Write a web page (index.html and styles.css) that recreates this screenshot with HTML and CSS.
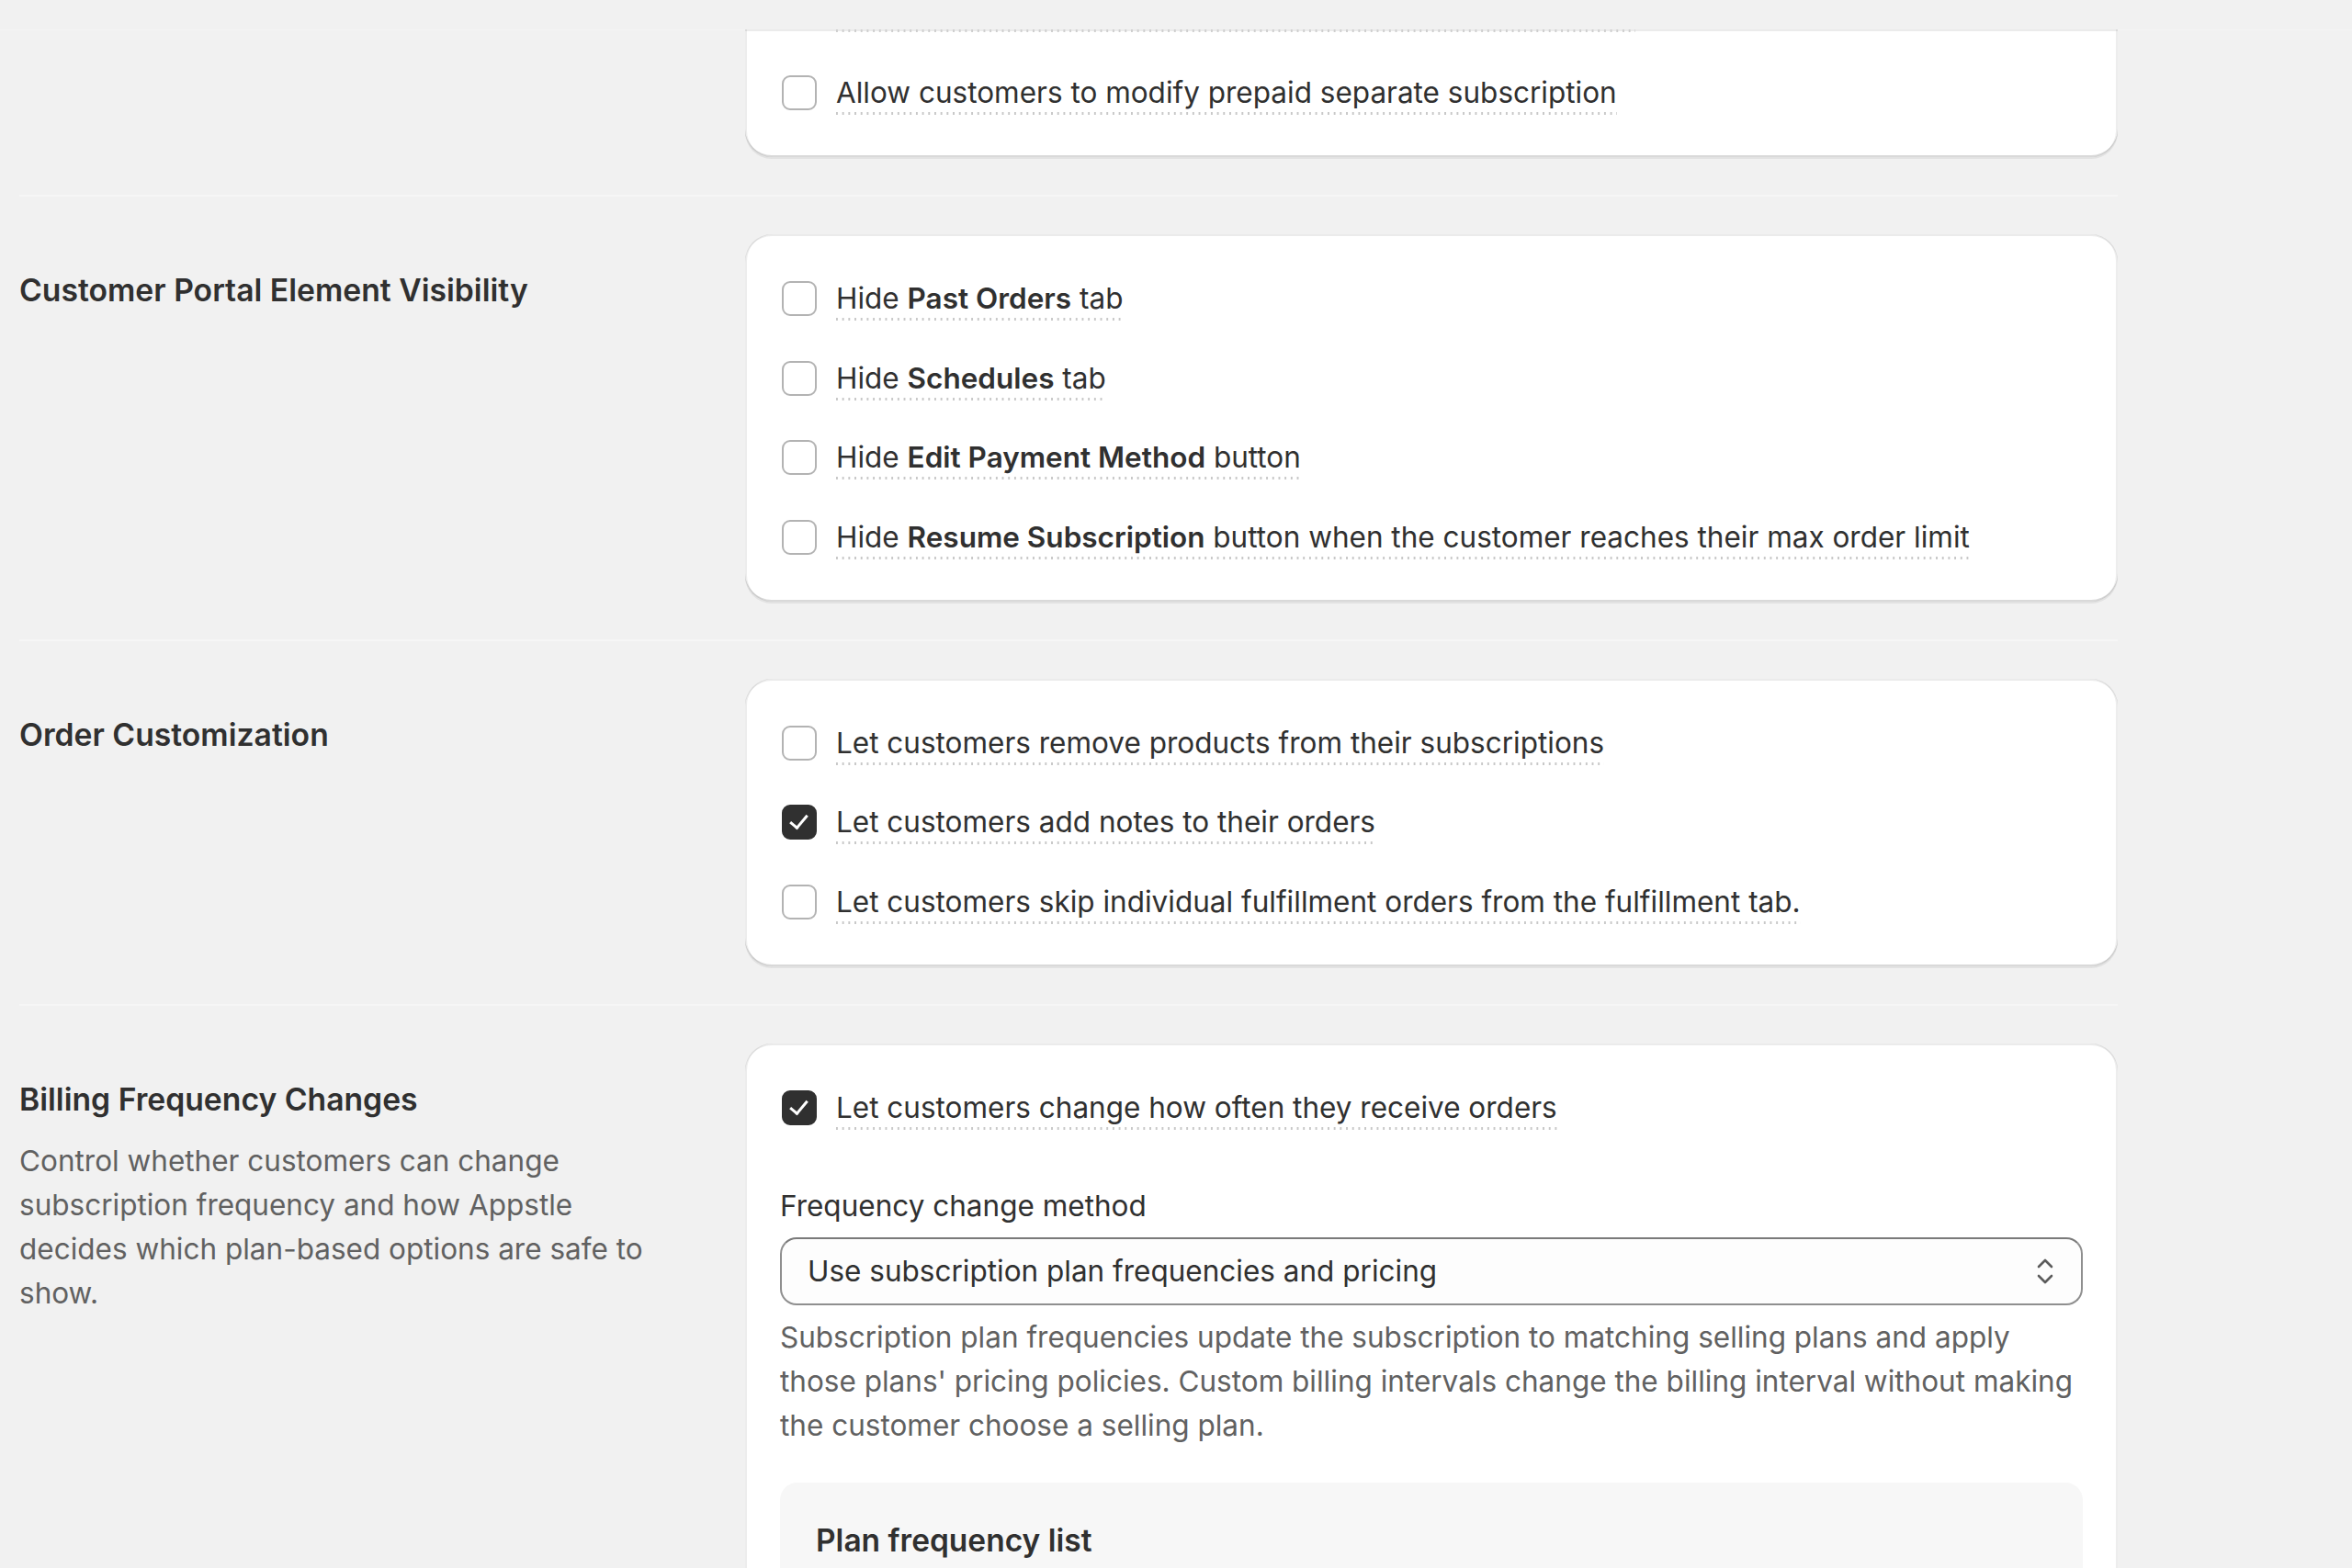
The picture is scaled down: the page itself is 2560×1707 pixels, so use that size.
FILE: index.html
```html
<!DOCTYPE html>
<html>
<head>
  <title>Customer Portal Settings</title>
  <link rel="stylesheet" href="styles.css">
</head>
<body>
  <div class="top-edge"></div>

  <div class="page">
    <section class="section first">
      <div class="annotation"></div>
      <div class="card cut-card">
        <div class="cut-line"></div>
        <div class="options">
          <label class="option">
            <span class="box"></span>
            <span class="text">Allow customers to modify prepaid separate subscription</span>
          </label>
        </div>
      </div>
    </section>

    <hr class="divider">

    <section class="section">
      <div class="annotation">
        <h2>Customer Portal Element Visibility</h2>
      </div>
      <div class="card">
        <div class="options">
          <label class="option">
            <span class="box"></span>
            <span class="text">Hide <b>Past Orders</b> tab</span>
          </label>
          <label class="option">
            <span class="box"></span>
            <span class="text">Hide <b>Schedules</b> tab</span>
          </label>
          <label class="option">
            <span class="box"></span>
            <span class="text">Hide <b>Edit Payment Method</b> button</span>
          </label>
          <label class="option">
            <span class="box"></span>
            <span class="text">Hide <b>Resume Subscription</b> button when the customer reaches their max order limit</span>
          </label>
        </div>
      </div>
    </section>

    <hr class="divider">

    <section class="section">
      <div class="annotation">
        <h2>Order Customization</h2>
      </div>
      <div class="card">
        <div class="options">
          <label class="option">
            <span class="box"></span>
            <span class="text">Let customers remove products from their subscriptions</span>
          </label>
          <label class="option">
            <span class="box checked"></span>
            <span class="text">Let customers add notes to their orders</span>
          </label>
          <label class="option">
            <span class="box"></span>
            <span class="text">Let customers skip individual fulfillment orders from the fulfillment tab.</span>
          </label>
        </div>
      </div>
    </section>

    <hr class="divider">

    <section class="section">
      <div class="annotation">
        <h2>Billing Frequency Changes</h2>
        <p>Control whether customers can change subscription frequency and how Appstle decides which plan-based options are safe to show.</p>
      </div>
      <div class="card">
        <div class="options">
          <label class="option">
            <span class="box checked"></span>
            <span class="text">Let customers change how often they receive orders</span>
          </label>
        </div>

        <div class="field">
          <div class="field-label">Frequency change method</div>
          <div class="select">
            <span>Use subscription plan frequencies and pricing</span>
            <svg width="22" height="34" viewBox="0 0 22 34">
              <polyline points="4,12 11,5 18,12" fill="none" stroke="#5c5c5c" stroke-width="2.6" stroke-linecap="round" stroke-linejoin="round"/>
              <polyline points="4,22 11,29 18,22" fill="none" stroke="#5c5c5c" stroke-width="2.6" stroke-linecap="round" stroke-linejoin="round"/>
            </svg>
          </div>
          <div class="help">Subscription plan frequencies update the subscription to matching selling plans and apply those plans' pricing policies. Custom billing intervals change the billing interval without making the customer choose a selling plan.</div>
        </div>

        <div class="inner-box">
          <h3>Plan frequency list</h3>
        </div>
      </div>
    </section>
  </div>
</body>
</html>
```

FILE: styles.css
```css
body {
  margin: 0;
  background-color: #f1f1f1;
  font-family: Inter, "Noto Sans", sans-serif;
  color: #303030;
  font-size: 31.5px;
  line-height: 48px;
  overflow: hidden;
}

.top-edge {
  height: 32px;
  border-bottom: 1px solid #f4f4f4;
  margin-bottom: -1px;
}

.page {
  width: 2284px;
  padding-left: 21px;
}

.section {
  display: grid;
  grid-template-columns: 742px 1494px;
  column-gap: 48px;
  padding: 41px 0 41px;
}

.section.first {
  padding-top: 0;
}

.divider {
  margin: 0;
  border: none;
  height: 2px;
  background-color: #f6f6f6;
}

.annotation {
  padding-top: 37px;
}

.annotation h2 {
  margin: 0;
  font-size: 33.7px;
  font-weight: 600;
  line-height: 48px;
}

.annotation p {
  margin: 19px 0 0;
  color: #616161;
  width: 700px;
}

.card {
  background-color: #fff;
  border-radius: 29px;
  padding: 38px;
  box-shadow: 0 2px 0 0 rgba(26, 26, 26, 0.07),
    inset 0 -2px 0 0 rgba(0, 0, 0, 0.15),
    inset 2px 0 0 0 rgba(0, 0, 0, 0.07),
    inset -2px 0 0 0 rgba(0, 0, 0, 0.07),
    inset 0 2px 0 0 rgba(204, 204, 204, 0.4);
}

.cut-card {
  border-top-left-radius: 0;
  border-top-right-radius: 0;
  padding-top: 0;
}

.cut-line {
  height: 4px;
  width: 870px;
  margin: 0 0 33px 61px;
  background-image: linear-gradient(to right, #cfcfcf 2px, transparent 2px);
  background-size: 6.7px 3px;
  background-repeat: repeat-x;
}

.options {
  display: flex;
  flex-direction: column;
  gap: 22.5px;
}

.option {
  display: flex;
  align-items: center;
  gap: 21px;
  min-height: 64px;
}

.box {
  flex: none;
  box-sizing: border-box;
  width: 38px;
  height: 38px;
  margin-left: 2px;
  border: 2.4px solid #b3b3b3;
  border-radius: 9px;
  background-color: #fff;
}

.box.checked {
  border-color: #303030;
  background-color: #303030;
  position: relative;
}

.box.checked::after {
  content: "";
  position: absolute;
  left: 11px;
  top: 5px;
  width: 8px;
  height: 16px;
  border: solid #fff;
  border-width: 0 3.5px 3.5px 0;
  transform: rotate(40deg);
}

.text {
  display: inline-block;
  background-image: linear-gradient(to right, #c8c8c8 2px, transparent 2px);
  background-size: 6.7px 3px;
  background-repeat: repeat-x;
  background-position: left bottom;
}

.text b {
  font-weight: 600;
}

.field {
  margin-top: 51px;
}

.field-label {
  margin-bottom: 10px;
}

.select {
  box-sizing: border-box;
  height: 74px;
  border: 2px solid #8f8f8f;
  border-top-color: #7a7a7a;
  border-radius: 18px;
  background-color: #fdfdfd;
  display: flex;
  align-items: center;
  justify-content: space-between;
  padding: 0 28px 0 28px;
}

.help {
  margin-top: 11px;
  color: #616161;
}

.inner-box {
  margin-top: 38px;
  background-color: #f7f7f7;
  border-radius: 19px;
  padding: 39px;
  height: 400px;
}

.inner-box h3 {
  margin: 0;
  font-size: 33.5px;
  font-weight: 600;
  line-height: 48px;
}
```
